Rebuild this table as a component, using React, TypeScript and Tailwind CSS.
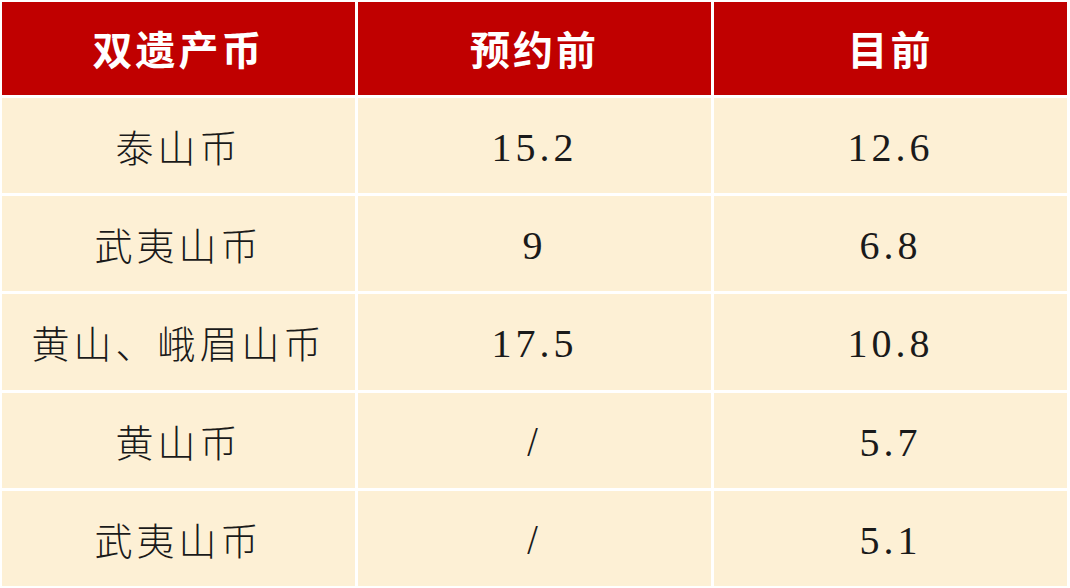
import React from "react";

const rows: [string, string, string][] = [
  ["泰山币", "15.2", "12.6"],
  ["武夷山币", "9", "6.8"],
  ["黄山、峨眉山币", "17.5", "10.8"],
  ["黄山币", "/", "5.7"],
  ["武夷山币", "/", "5.1"],
];

const cjk = "[font-family:'Noto_Sans_CJK_SC',sans-serif]";

export default function App() {
  return (
    <div className="w-[1070px] h-[588px] bg-white p-[2px] pr-[3px]">
      <div className="grid grid-cols-3 grid-rows-[93px_repeat(5,1fr)] gap-[3px] h-full">
        {["双遗产币", "预约前", "目前"].map((h) => (
          <div
            key={h}
            className={`bg-[#c00000] text-white flex items-center justify-center text-[40px] font-bold tracking-[3px] pb-[2px] ${cjk}`}
          >
            {h}
          </div>
        ))}
        {rows.map((r, i) => (
          <React.Fragment key={i}>
            <div
              className={`bg-[#fdf0d5] text-[#1a1a1a] flex items-center justify-center text-[38px] tracking-[4px] font-light ${cjk}`}
            >
              {r[0]}
            </div>
            {[r[1], r[2]].map((v, j) => (
              <div
                key={j}
                className="bg-[#fdf0d5] text-[#1a1a1a] flex items-center justify-center text-[40px] tracking-[4px] pt-[5px] [font-family:'Liberation_Serif',serif]"
              >
                {v === "/" ? <span className="font-light text-[38px] scale-y-110">/</span> : v}
              </div>
            ))}
          </React.Fragment>
        ))}
      </div>
    </div>
  );
}
